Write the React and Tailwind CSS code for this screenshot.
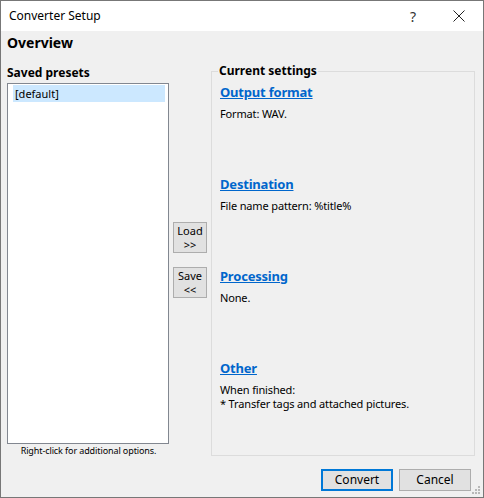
import React from "react";

const font = { fontFamily: '"Noto Sans", "Open Sans", sans-serif' };

function Section({ title, lines }) {
  return (
    <div className="h-[92px] flex flex-col">
      <a className="text-[13px] font-bold text-[#0066cc] underline leading-[18px] h-[18px] tracking-[-0.2px]">{title}</a>
      <div className="mt-[6px] text-[11px] leading-[14px] text-black tracking-[-0.15px]">
        {lines.map((l, i) => (
          <div key={i}>{l}</div>
        ))}
      </div>
    </div>
  );
}

export default function App() {
  return (
    <div className="w-[484px] h-[498px] border border-[#777777] flex flex-col bg-[#f0f0f0] text-black" style={font}>
      <div className="h-[30px] bg-white flex items-center shrink-0">
        <span className="pl-[8px] text-[12px] flex-1">Converter Setup</span>
        <span className="w-[46px] text-center text-[14px] text-[#333]">?</span>
        <span className="w-[46px] flex justify-center mr-[1px]">
          <svg width="12" height="12" viewBox="0 0 12 12">
            <path d="M0.5 0.5 L11.5 11.5 M11.5 0.5 L0.5 11.5" stroke="#222" strokeWidth="1" />
          </svg>
        </span>
      </div>
      <div className="flex-1 flex flex-col px-[6px] relative">
        <div className="text-[14px] font-bold leading-[20px] mt-[2px]">Overview</div>
        <div className="flex mt-[12px] h-[392px]">
          <div className="w-[162px] flex flex-col">
            <div className="text-[12px] font-bold leading-[16px] h-[16px]">Saved presets</div>
            <div className="mt-[2px] h-[361px] border border-[#828790] bg-white p-[1px] px-[5px]">
              <div className="bg-[#cce8ff] h-[17px] text-[11px] leading-[17px] pl-[2px] -mr-[2px]">[default]</div>
            </div>
            <div className="text-[9px] leading-[12px] text-center mt-[1px] tracking-[-0.1px] pl-[1px]">Right-click for additional options.</div>
          </div>
          <div className="w-[42px] flex flex-col items-center pt-[157px]">
            <button className="w-[34px] h-[31px] bg-[#e1e1e1] border border-[#adadad] text-[11px] leading-[14px] flex flex-col items-center justify-center">
              <span>Load</span>
              <span>&gt;&gt;</span>
            </button>
            <button className="mt-[14px] w-[34px] h-[31px] bg-[#e1e1e1] border border-[#adadad] text-[11px] leading-[14px] flex flex-col items-center justify-center">
              <span>Save</span>
              <span>&lt;&lt;</span>
            </button>
          </div>
          <div className="w-[264px] relative pt-[6px]">
            <div className="h-[385px] border border-[#dcdcdc] pl-[8px] pt-[11px]">
              <Section title="Output format" lines={["Format: WAV."]} />
              <Section title="Destination" lines={["File name pattern: %title%"]} />
              <Section title="Processing" lines={["None."]} />
              <Section title="Other" lines={["When finished:", "* Transfer tags and attached pictures."]} />
            </div>
            <div className="absolute left-[7px] top-[-2px] bg-[#f0f0f0] px-[1px] text-[12px] font-bold leading-[16px]">Current settings</div>
          </div>
        </div>
        <div className="flex justify-end mt-[12px] pr-[6px] gap-[6px]">
          <button className="w-[72px] h-[22px] bg-[#e1e1e1] border-2 border-[#0078d7] text-[12px] leading-[18px]">Convert</button>
          <button className="w-[72px] h-[22px] bg-[#e1e1e1] border border-[#adadad] text-[12px] leading-[20px]">Cancel</button>
        </div>
        <svg className="absolute right-[2px] bottom-[2px]" width="10" height="10" viewBox="0 0 10 10">
          <g fill="#b8b8b8">
            <rect x="7" y="1" width="2" height="2" />
            <rect x="4" y="4" width="2" height="2" />
            <rect x="7" y="4" width="2" height="2" />
            <rect x="1" y="7" width="2" height="2" />
            <rect x="4" y="7" width="2" height="2" />
            <rect x="7" y="7" width="2" height="2" />
          </g>
        </svg>
      </div>
    </div>
  );
}
